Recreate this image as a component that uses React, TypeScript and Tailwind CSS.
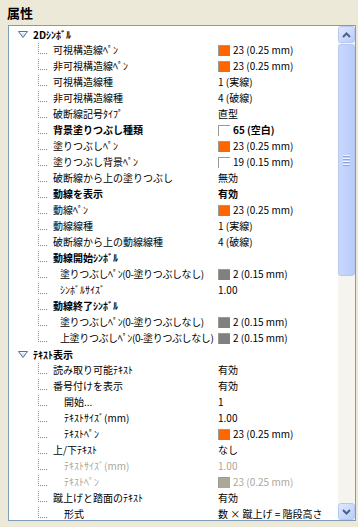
import React from 'react';

type Row = {
    label: string;
    kind: 'head' | 'item';
    indent?: number;
    bold?: boolean;
    dim?: boolean;
    tight?: boolean;
    value?: string;
    swatch?: string;
};

const ORANGE = '#FF6600';
const GRAY = '#808080';

const rows: Row[] = [
    { kind: 'head', label: '2Dｼﾝﾎﾞﾙ' },
    { kind: 'item', label: '可視構造線ﾍﾟﾝ', swatch: ORANGE, value: '23 (0.25 mm)' },
    { kind: 'item', label: '非可視構造線ﾍﾟﾝ', swatch: ORANGE, value: '23 (0.25 mm)' },
    { kind: 'item', label: '可視構造線種', value: '1 (実線)' },
    { kind: 'item', label: '非可視構造線種', value: '4 (破線)' },
    { kind: 'item', label: '破断線記号ﾀｲﾌﾟ', value: '直型' },
    { kind: 'item', label: '背景塗りつぶし種類', bold: true, swatch: '#FFFFFF', value: '65 (空白)' },
    { kind: 'item', label: '塗りつぶしﾍﾟﾝ', swatch: ORANGE, value: '23 (0.25 mm)' },
    { kind: 'item', label: '塗りつぶし背景ﾍﾟﾝ', swatch: '#FFFFFF', value: '19 (0.15 mm)' },
    { kind: 'item', label: '破断線から上の塗りつぶし', value: '無効' },
    { kind: 'item', label: '動線を表示', bold: true, value: '有効' },
    { kind: 'item', label: '動線ﾍﾟﾝ', swatch: ORANGE, value: '23 (0.25 mm)' },
    { kind: 'item', label: '動線線種', value: '1 (実線)' },
    { kind: 'item', label: '破断線から上の動線線種', value: '4 (破線)' },
    { kind: 'item', label: '動線開始ｼﾝﾎﾞﾙ', bold: true },
    { kind: 'item', label: '塗りつぶしﾍﾟﾝ(0-塗りつぶしなし)', indent: 1, tight: true, swatch: GRAY, value: '2 (0.15 mm)' },
    { kind: 'item', label: 'ｼﾝﾎﾞﾙｻｲｽﾞ', indent: 1, value: '1.00' },
    { kind: 'item', label: '動線終了ｼﾝﾎﾞﾙ', bold: true },
    { kind: 'item', label: '塗りつぶしﾍﾟﾝ(0-塗りつぶしなし)', indent: 1, tight: true, swatch: GRAY, value: '2 (0.15 mm)' },
    { kind: 'item', label: '上塗りつぶしﾍﾟﾝ(0-塗りつぶしなし)', indent: 1, tight: true, swatch: GRAY, value: '2 (0.15 mm)' },
    { kind: 'head', label: 'ﾃｷｽﾄ表示' },
    { kind: 'item', label: '読み取り可能ﾃｷｽﾄ', value: '有効' },
    { kind: 'item', label: '番号付けを表示', value: '有効' },
    { kind: 'item', label: '開始...', indent: 2, value: '1' },
    { kind: 'item', label: 'ﾃｷｽﾄｻｲｽﾞ(mm)', indent: 2, value: '1.00' },
    { kind: 'item', label: 'ﾃｷｽﾄﾍﾟﾝ', indent: 2, swatch: ORANGE, value: '23 (0.25 mm)' },
    { kind: 'item', label: '上/下ﾃｷｽﾄ', value: 'なし' },
    { kind: 'item', label: 'ﾃｷｽﾄｻｲｽﾞ(mm)', indent: 2, dim: true, value: '1.00' },
    { kind: 'item', label: 'ﾃｷｽﾄﾍﾟﾝ', indent: 2, dim: true, swatch: '#ACA899', value: '23 (0.25 mm)' },
    { kind: 'item', label: '蹴上げと踏面のﾃｷｽﾄ', value: '有効' },
    { kind: 'item', label: '形式', indent: 2, value: '数 × 蹴上げ = 階段高さ' },
];

const Triangle = () => (
    <svg width="10" height="7" viewBox="0 0 10 7" className="shrink-0">
        <defs>
            <linearGradient id="tri" x1="0" y1="0" x2="0" y2="1">
                <stop offset="0" stopColor="#ffffff" />
                <stop offset="1" stopColor="#b9c9e6" />
            </linearGradient>
        </defs>
        <path d="M0.5 0.5 H9.5 L5 6.5 Z" fill="url(#tri)" stroke="#5a7096" strokeWidth="1" strokeLinejoin="round" />
    </svg>
);

const Arrow = ({ up }: { up?: boolean }) => (
    <svg width="9" height="6" viewBox="0 0 9 6">
        <path d={up ? 'M1 5 L4.5 1.5 L8 5' : 'M1 1 L4.5 4.5 L8 1'} fill="none" stroke="#4d6185" strokeWidth="2" />
    </svg>
);

const ScrollButton = ({ up }: { up?: boolean }) => (
    <div className="h-[17px] w-[17px] rounded-[3px] border border-[#b5c7f2] bg-gradient-to-br from-[#dfe8fe] to-[#b9cdfa] flex items-center justify-center">
        <Arrow up={up} />
    </div>
);

const ScrollBar = () => (
    <div className="w-[17px] shrink-0 flex flex-col bg-[#f5f4ee]">
        <ScrollButton up />
        <div className="flex-1 flex flex-col pt-[1px]">
            <div className="h-[232px] rounded-[3px] border border-[#b5c7f2] bg-gradient-to-r from-[#c9d8fd] to-[#b8cbf8] flex flex-col items-center justify-center gap-[1px]">
                {[0, 1, 2, 3].map((i) => (
                    <div key={i} className="w-[7px] h-[2px] border-t border-[#eef3ff] border-b border-b-[#8ca6e0]" />
                ))}
            </div>
        </div>
        <ScrollButton />
    </div>
);

const Swatch = ({ color }: { color: string }) => (
    <span
        className="inline-block w-[12px] h-[11px] border-t border-l border-[#9c9a92] shrink-0"
        style={{ backgroundColor: color }}
    />
);

const PropRow = ({ row }: { row: Row }) => {
    if (row.kind === 'head') {
        return (
            <div className="h-4 flex items-center pl-[9px] gap-[5px] font-bold text-black whitespace-nowrap">
                <Triangle />
                <span>{row.label}</span>
            </div>
        );
    }
    const pad = row.indent === 2 ? 'ml-[17px]' : row.indent === 1 ? 'ml-[13px]' : 'ml-[6px]';
    const color = row.dim ? 'text-[#aca899]' : 'text-black';
    return (
        <div className={`h-4 flex items-start whitespace-nowrap ${color}`}>
            <div className="w-[209px] shrink-0 flex items-start overflow-hidden">
                <span className="ml-[29px] mt-[1px] w-[9px] h-[11px] shrink-0 border-l border-b border-dotted border-[#8a8a8a]" />
                <span className={`${pad} leading-4 ${row.bold ? 'font-bold' : ''} ${row.tight ? 'tracking-[-0.4px]' : ''}`}>
                    {row.label}
                </span>
            </div>
            <div className={`flex items-center h-4 gap-[3px] ${row.bold ? 'font-bold' : ''}`}>
                {row.swatch && <Swatch color={row.swatch} />}
                {row.value && <span className="leading-4">{row.value}</span>}
            </div>
        </div>
    );
};

export default function App() {
    return (
        <div
            className="w-[358px] h-[527px] bg-[#ece9d8] overflow-hidden flex flex-col text-[10px]"
            style={{ fontFamily: '"Noto Sans CJK JP", "Noto Sans", sans-serif' }}
        >
            <div className="h-[25px] pl-[7px] flex items-center font-bold text-[13px] text-black">属性</div>
            <div className="mx-[8px] mr-[2px] h-[496px] border border-[#7f9db9] bg-white flex overflow-hidden">
                <div className="flex-1 overflow-hidden">
                    {rows.map((row, idx) => (
                        <PropRow key={idx} row={row} />
                    ))}
                </div>
                <ScrollBar />
            </div>
        </div>
    );
}
